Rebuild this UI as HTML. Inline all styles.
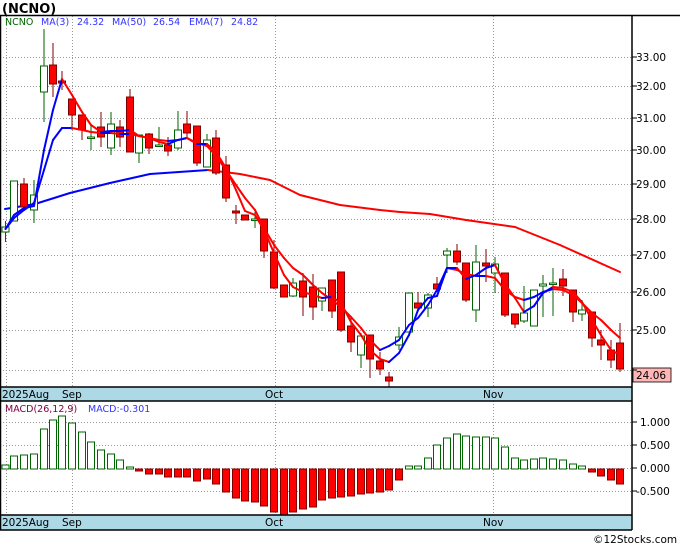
<!DOCTYPE html>
<html><head><meta charset="utf-8"><style>
body{margin:0;background:#fff;width:680px;height:546px;overflow:hidden}
svg{display:block;font-family:"DejaVu Sans","Liberation Sans",sans-serif}
</style></head><body>
<svg id="s" width="680" height="546" xmlns="http://www.w3.org/2000/svg">
<rect width="680" height="546" fill="#fff"/>
<text x="2" y="13" font-size="13" font-weight="bold" fill="#000">(NCNO)</text>
<g id="grid" stroke="#999" stroke-dasharray="1,2" stroke-width="1"></g>
<rect x="0" y="387" width="632" height="14" fill="#add8e6"/>
<rect x="0" y="515" width="632" height="15" fill="#add8e6"/>
<g id="c"></g>
<g stroke="#000" stroke-width="1.5" fill="none">
<line x1="0" y1="15.5" x2="680" y2="15.5"/>
<line x1="632" y1="15" x2="632" y2="530"/>
<line x1="0" y1="387" x2="632" y2="387"/>
<line x1="0" y1="401" x2="632" y2="401"/>
<line x1="0" y1="515" x2="632" y2="515"/>
<line x1="0" y1="530" x2="632" y2="530"/>
<line x1="0.5" y1="15" x2="0.5" y2="530"/>
</g>
<g font-size="10.5" fill="#000">
<text x="636" y="61">33.00</text><text x="636" y="90">32.00</text><text x="636" y="122">31.00</text>
<text x="636" y="154">30.00</text><text x="636" y="188">29.00</text><text x="636" y="223">28.00</text>
<text x="636" y="259">27.00</text><text x="636" y="296">26.00</text><text x="636" y="334">25.00</text>
<rect x="633" y="368" width="38" height="14" fill="#ffb6b6" stroke="#000" stroke-width="0.8"/>
<text x="636" y="379">24.06</text>
<text x="640" y="426">1.000</text><text x="640" y="449">0.500</text><text x="640" y="472">0.000</text><text x="636" y="495">-0.500</text>
<text x="2" y="398">2025Aug</text><text x="62" y="398">Sep</text><text x="265" y="398">Oct</text><text x="483" y="398">Nov</text>
<text x="2" y="526">2025Aug</text><text x="62" y="526">Sep</text><text x="265" y="526">Oct</text><text x="483" y="526">Nov</text>
<text x="593" y="543" font-size="10.5">©12Stocks.com</text>
</g>
<g font-size="9.5" fill="#3333ff">
<text x="5" y="25" fill="#006400">NCNO</text>
<text x="41" y="25">MA(3)</text><text x="77" y="25">24.32</text>
<text x="112" y="25">MA(50)</text><text x="153" y="25">26.54</text>
<text x="189" y="25">EMA(7)</text><text x="231" y="25">24.82</text>
<text x="5" y="412" fill="#800040">MACD(26,12,9)</text>
<text x="88" y="412">MACD:-0.301</text>
</g>
</svg>
<script>
var NS="http://www.w3.org/2000/svg",g=document.getElementById('c'),gr=document.getElementById('grid');
function el(p,t,a){var e=document.createElementNS(NS,t);for(var k in a)e.setAttribute(k,a[k]);p.appendChild(e);return e;}
[57,86,118,150,184,219,255,292,330,370,422,445,468,491].forEach(function(y){el(gr,'line',{x1:0,x2:632,y1:y+.5,y2:y+.5});
el(g.parentNode,'line',{x1:632,x2:637,y1:y,y2:y,stroke:'#000'});});
[6,72,275,493].forEach(function(x){el(gr,'line',{x1:x+.5,x2:x+.5,y1:16,y2:387});el(gr,'line',{x1:x+.5,x2:x+.5,y1:401,y2:515});});
var C=[[5.5,227,232,221,242,1],[14,181,221,181,221,1],[24,184,207,178,210,0],[34,195,210,180,223,1],[44,66,92,29,122,1],[53,65,84,43,97,0],[62,81,83,71,90,0],[72,99,115,99,130,0],[82,115,130,115,140,0],[91,137,137,124,150,1],[101,127,137,112,147,0],[111,124,148,112,155,1],[120,127,137,120,147,0],[130,97,152,89,152,0],[139,135,153,135,163,1],[149,134,148,133,154,0],[159,145,145,127,145,1],[168,145,151,137,156,0],[178,130,148,111,150,1],[187,124,133,111,137,0],[197,126,163,126,166,0],[207,140,167,134,167,1],[216,138,173,130,175,0],[226,165,198,156,202,0],[236,211,213,205,224,0],[245,215,220,215,220,0],[255,219,219,212,228,1],[264,219,251,219,258,0],[274,252,288,240,289,0],[284,285,297,285,297,0],[293,283,296,278,297,1],[303,281,297,273,316,0],[313,287,307,274,320,0],[322,288,301,288,311,1],[332,280,311,280,318,0],[341,272,330,272,332,0],[351,326,342,316,352,0],[361,336,355,333,368,1],[370,335,359,335,378,0],[380,361,369,352,375,0],[389,377,381,372,387,0],[399,337,345,327,350,1],[409,293,332,293,332,1],[418,303,308,292,312,0],[428,295,308,293,317,1],[437,284,289,277,292,0],[447,251,255,248,273,1],[457,251,262,244,265,0],[466,263,300,263,302,0],[476,262,310,245,322,1],[486,263,266,249,282,0],[495,264,273,257,293,1],[505,273,315,273,317,0],[515,314,324,314,328,0],[524,313,321,286,323,1],[534,290,326,290,326,1],[543,284,286,275,317,1],[553,283,284,268,316,1],[563,279,286,269,296,0],[573,290,312,290,322,0],[582,310,314,300,321,1],[592,312,338,312,347,0],[601,340,345,330,360,0],[611,350,360,340,368,0],[620,343,369,323,372,0]];
function line(pts,bw){for(var i=1;i<pts.length;i++){var a=pts[i-1],b=pts[i];var col=bw?bw(a,b,i):(b[1]<=a[1]?'#0000ff':'#ff0000');
el(g,'line',{x1:a[0],y1:a[1],x2:b[0],y2:b[1],stroke:col,'stroke-width':2,'stroke-linecap':'round'});}}
var ma50=[[5,209],[35,204],[70,193],[110,183],[150,174],[208,170],[240,174],[270,180],[300,195],[340,205],[380,210],[400,212],[430,214],[466,220],[515,227],[560,245],[620,272]];
line(ma50,function(a,b){return a[0]<208?'#0000ff':'#ff0000';});
C.forEach(function(c){var col=c[5]?'#006400':'#800000';
el(g,'line',{x1:c[0],x2:c[0],y1:c[3],y2:c[4],stroke:col,'stroke-width':1});
el(g,'rect',{x:c[0]-3.5,y:c[1],width:7,height:Math.max(c[2]-c[1],1.5),fill:c[5]?'#fff':'#ff0000',stroke:col,'stroke-width':1});});
var xs=C.map(function(c){return c[0];});
var m3=[229,215,208,206,150,110,79,95,112,125,132,131,131,130,136,138,142,144,140,138,144,144,152,168,190,211,215,230,253,275,287,292,295,298,297,303,322,335,350,359,362,353,335,310,298,296,268,268,279,275,268,265,284,298,312,306,293,287,288,292,302,320,335,350,355];
var e7=[229,218,210,203,170,140,128,128,130,132,133,133,134,134,136,138,140,141,140,138,143,146,156,170,185,198,210,228,245,258,268,275,285,293,300,307,317,328,340,350,346,340,325,318,305,290,268,270,274,276,276,278,290,297,300,297,292,289,290,295,303,313,320,330,338];
line(e7.map(function(y,i){return [xs[i],y];}));
line(m3.map(function(y,i){return [xs[i],y];}));
var md=[465,456,455,454,429,420,416,423,432,442,450,454,460,467,471,474,474,477,477,477,481,479,484,492,498,501,502,506,512,515,512,509,507,500,498,497,496,494,493,492,490,480,466,466,458,445,438,434,436,437,437,438,447,458,460,459,458,459,460,464,466,472,476,480,484];
var z=469;md.forEach(function(y,i){var pos=y<z;var t=Math.min(y,z),h=Math.max(Math.abs(y-z),1.5);
el(g,'rect',{x:xs[i]-3.5,y:t,width:7,height:h,fill:pos?'#fff':'#ff0000',stroke:pos?'#006400':'#800000','stroke-width':1});});
</script>
</body></html>
